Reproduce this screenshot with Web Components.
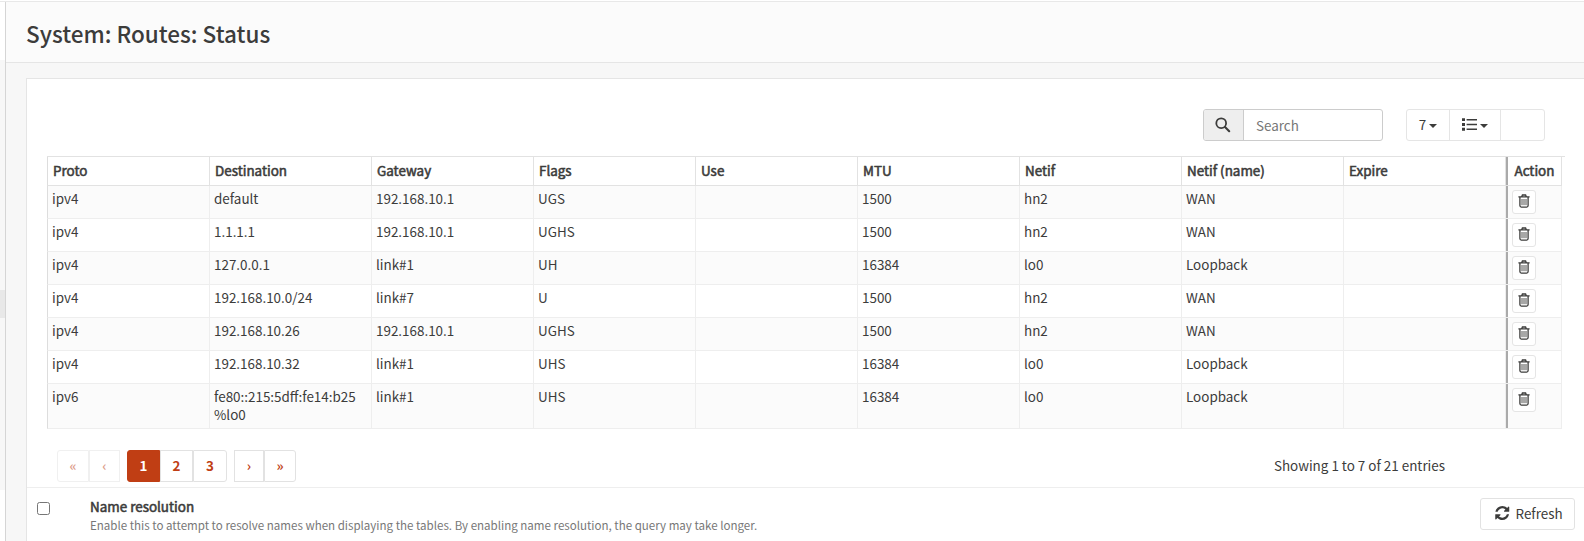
<!DOCTYPE html>
<html lang="en">
<head>
<meta charset="utf-8">
<title>System: Routes: Status</title>
<style>
html, body { margin: 0; height: 100%; overflow: hidden; }
body { font: 13.43px/18px "Noto Sans CJK SC", "Noto Sans", sans-serif; color: #3c3c3b; background: #fff; }
</style>
</head>
<body>
<routes-app></routes-app>
<script>
const define = (name, css, html) => customElements.define(name, class extends HTMLElement {
  connectedCallback() {
    if (this.shadowRoot) return;
    const root = this.attachShadow({ mode: 'open' });
    root.innerHTML = `<style>*{box-sizing:border-box}:host{box-sizing:border-box}${css}</style>${typeof html === 'function' ? html(this) : html}`;
  }
});

const icons = {
  search: ['0 0 16 16', '<circle cx="6.2" cy="6.2" r="4.900" fill="none" stroke="currentColor" stroke-width="1.800"/><path d="M10 10L14.200 14.200" stroke="currentColor" stroke-width="2.100" stroke-linecap="round"/>'],
  list: ['0 0 15 13', '<path d="M0 .2h3v2.900H0zM0 5h3v2.900H0zM0 9.800h3v2.900H0zM4.600 1H15v1.500H4.600zM4.600 5.800H15v1.500H4.600zM4.600 10.600H15v1.500H4.600z" fill="currentColor"/>'],
  trash: ['0 0 12 14', '<path d="M1.900 3.500V11.600Q1.900 13.100 3.300 13.100H8.700Q10.100 13.100 10.100 11.600V3.500M.4 2.900H11.600M3.700 2.700L4.400 1H7.600L8.300 2.700" fill="none" stroke="currentColor" stroke-width="1.300"/><path d="M4 5v6.200M6 5v6.200M8 5v6.200" fill="none" stroke="currentColor" stroke-width=".9"/>'],
  refresh: ['0 0 1536 1536', '<path fill="currentColor" d="M1511 928q0 5-1 7-64 268-268 434.500t-478 166.500q-146 0-282.500-55t-243.500-157l-129 129q-19 19-45 19t-45-19-19-45v-448q0-26 19-45t45-19h448q26 0 45 19t19 45-19 45l-137 137q71 66 161 102t187 36q134 0 250-65t186-179q11-17 53-117 8-23 30-23h192q13 0 22.500 9.500t9.500 22.500zm25-800v448q0 26-19 45t-45 19h-448q-26 0-45-19t-19-45 19-45l138-138q-148-137-349-137-134 0-250 65t-186 179q-11 17-53 117-8 23-30 23h-199q-13 0-22.500-9.500t-9.500-22.500v-7q65-268 270-434.500t480-166.500q146 0 284 55.500t245 156.500l130-129q19-19 45-19t45 19 19 45z"/>']
};

define('ui-icon', ':host{display:inline-flex}svg{display:block;width:100%;height:100%;overflow:visible}',
  el => { const [vb, body] = icons[el.getAttribute('name')]; return `<svg viewBox="${vb}" aria-hidden="true">${body}</svg>`; });

define('side-edge', `:host{display:flex;flex-direction:column;width:6px;flex:none;border-right:1px solid #d5d5d5;background:#fff}
  .nav{margin-top:58px;height:430px;background:#f7f7f7}.current{margin-top:230px;height:28px;background:#e8e8e8}`,
  '<div class="nav"><div class="current"></div></div>');

define('page-header', `:host{display:block;height:61px;background:#fbfbfb;border-bottom:1px solid #e5e5e5;padding:15px 0 0 20px}
  h1{margin:0;font-size:22.500px;line-height:32px;font-weight:500}`, '<h1><slot></slot></h1>');

define('search-box', `:host{display:flex;width:180px;height:32px;border:1px solid #ccc;border-radius:3px;overflow:hidden;background:#fff}
  .addon{width:40px;background:#eee;border-right:1px solid #ccc;display:flex;align-items:center;justify-content:center}
  ui-icon{width:16px;height:16px;margin-right:1px}
  .field{flex:1;padding:6px 0 0 12px;color:#777}`,
  '<div class="addon"><ui-icon name="search"></ui-icon></div><div class="field">Search</div>');

define('grid-actions', `:host{display:flex;width:139px;height:32px;border:1px solid #e5e5e5;border-radius:3px}
  div{display:flex;align-items:center;justify-content:center;border-right:1px solid #e5e5e5;gap:3px}
  .count{width:43px}.cols{width:51px}.last{flex:1;border:0}
  i{border:4px solid transparent;border-top-color:currentColor;border-bottom:0;margin-top:2px}
  span{margin-top:-2px}
  ui-icon{width:15px;height:13px;margin:-1px 0 0 0}`,
  '<div class="count"><span>7</span><i></i></div><div class="cols"><ui-icon name="list"></ui-icon><i></i></div><div class="last"></div>');

define('route-cell', `:host{display:block;padding:3px 4px 0;border-right:1px solid #eee;overflow-wrap:anywhere}
  :host([head]){padding:4px 5px 0;border-color:#e2e2e2;-webkit-text-stroke:.55px currentColor}
  :host([action]){border-left:2px solid #aaa}
  :host([head][action]){padding:4px 0 0 6.500px}`, '<slot></slot>');

define('delete-button', `:host{display:flex;align-items:center;justify-content:center;width:24px;height:24px;border:1px solid #e5e5e5;border-radius:3px;background:#fff}
  ui-icon{width:12px;height:14px;margin-top:-2px}`, '<ui-icon name="trash"></ui-icon>');

const heads = ['Proto', 'Destination', 'Gateway', 'Flags', 'Use', 'MTU', 'Netif', 'Netif (name)', 'Expire'];
const routes = [
  ['ipv4', 'default', '192.168.10.1', 'UGS', '', '1500', 'hn2', 'WAN', ''],
  ['ipv4', '1.1.1.1', '192.168.10.1', 'UGHS', '', '1500', 'hn2', 'WAN', ''],
  ['ipv4', '127.0.0.1', 'link#1', 'UH', '', '16384', 'lo0', 'Loopback', ''],
  ['ipv4', '192.168.10.0/24', 'link#7', 'U', '', '1500', 'hn2', 'WAN', ''],
  ['ipv4', '192.168.10.26', '192.168.10.1', 'UGHS', '', '1500', 'hn2', 'WAN', ''],
  ['ipv4', '192.168.10.32', 'link#1', 'UHS', '', '16384', 'lo0', 'Loopback', ''],
  ['ipv6', 'fe80::215:5dff:fe14:b25<br>%lo0', 'link#1', 'UHS', '', '16384', 'lo0', 'Loopback', '']
];

define('route-table', `:host{display:block;width:1518px;border-top:1px solid #e2e2e2}
  .row{display:grid;grid-template-columns:repeat(9,162px) 56px;width:1515px;min-height:33px;border-left:1px solid #ddd;border-bottom:1px solid #eee}
  .head{min-height:29px;border-bottom-color:#e2e2e2}
  .row:nth-child(even of .data){background:#fff}.row:nth-child(odd of .data){background:#fbfbfb}
  .data:last-child{min-height:45px}
  delete-button{margin-top:1px}`,
  () => `<div class="row head">${heads.map(h => `<route-cell head>${h}</route-cell>`).join('')}<route-cell head action>Action</route-cell></div>` +
    routes.map(r => `<div class="row data">${r.map(c => `<route-cell>${c}</route-cell>`).join('')}<route-cell action><delete-button></delete-button></route-cell></div>`).join(''));

define('page-link', `:host{display:flex;justify-content:center;height:32px;width:32px;padding-top:5px;border:1px solid #e2e2e2;color:#c03e14;font-weight:700;background:#fff}
  :host([off]){opacity:.5}:host([on]){background:#c03e14;border-color:#c03e14;color:#fff}`, '<slot></slot>');

define('page-links', `:host{display:flex}
  page-link:nth-of-type(1){border-radius:3px 0 0 3px}page-link:nth-of-type(2){width:31px;margin-right:7px}
  page-link:nth-of-type(3){width:33px;border-radius:3px 0 0 3px}page-link:nth-of-type(4){width:33px}
  page-link:nth-of-type(5){width:34px;border-radius:0 3px 3px 0;margin-right:7px}
  page-link:nth-of-type(6){width:30px}page-link:nth-of-type(7){border-radius:0 3px 3px 0}`,
  '<page-link off>«</page-link><page-link off>‹</page-link><page-link on>1</page-link><page-link>2</page-link><page-link>3</page-link><page-link>›</page-link><page-link>»</page-link>');

define('refresh-button', `:host{display:flex;align-items:center;width:95px;height:32px;border:1px solid #e2e2e2;border-radius:3px;padding-left:14px;gap:6px}
  span{margin-top:-2px}
  ui-icon{width:14.500px;height:14px;margin-top:-2px}`, '<ui-icon name="refresh"></ui-icon><span>Refresh</span>');

define('name-resolution', `:host{display:flex;height:54px;border-top:1px solid #eee;padding:10px 9px 0 10px;align-items:flex-start}
  .box{width:13px;height:13px;border:1px solid #767676;border-radius:2.500px;margin-top:4px}
  .text{flex:1;margin:-1px 0 0 40px}
  b{display:block;font-weight:400;-webkit-text-stroke:.55px currentColor}
  small{display:block;font-size:11.550px;line-height:19px;padding-top:1px;color:#777}`,
  '<div class="box" role="checkbox"></div><div class="text"><b>Name resolution</b><small>Enable this to attempt to resolve names when displaying the tables. By enabling name resolution, the query may take longer.</small></div><refresh-button></refresh-button>');

define('content-panel', `:host{display:block;margin:15px 0 0 20px;border:1px solid #e5e5e5;border-width:1px 0 0 1px;background:#fff;height:463px}
  .tools{display:flex;justify-content:flex-end;gap:23px;padding:30px 39px 0 0;height:77px}
  route-table{margin-left:20px}
  .foot{display:flex;justify-content:space-between;padding:0 139px 0 30px;height:32px;margin:21px 0 5px}
  .foot span{padding-top:6px}`,
  '<div class="tools"><search-box></search-box><grid-actions></grid-actions></div><route-table></route-table><div class="foot"><page-links></page-links><span>Showing 1 to 7 of 21 entries</span></div><name-resolution></name-resolution>');

define('routes-app', `:host{display:block;height:541px;padding-top:1px;background:#fff}
  .shell{display:flex;border-top:1px solid #e8e8e8;height:540px}main{flex:1;min-width:0;background:#f7f7f7}`,
  '<div class="shell"><side-edge></side-edge><main><page-header>System: Routes: Status</page-header><content-panel></content-panel></main></div>');
</script>
</body>
</html>
